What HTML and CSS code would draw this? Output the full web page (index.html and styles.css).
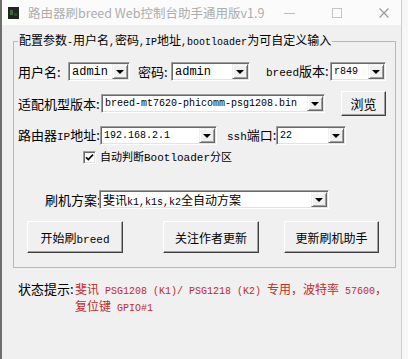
FILE: index.html
```html
<!DOCTYPE html>
<html lang="zh-CN">
<head>
  <meta charset="UTF-8">
  <title>路由器刷breed Web控制台助手通用版v1.9</title>
  <link rel="stylesheet" href="styles.css">
</head>
<body>

<div class="window">
  <div class="titlebar">
    <svg class="app-icon" width="11" height="12" viewBox="0 0 11 12">
      <rect width="11" height="12" fill="#1e261e"/>
      <path d="M2 3h3v5H2z" fill="#3f6b3a"/>
      <path d="M6 6h3v3H6z" fill="#2c4a2a"/>
    </svg>
    <span class="title">路由器刷breed Web控制台助手通用版v1.9</span>
    <span class="ctl ctl-min"><i></i></span>
    <span class="ctl ctl-max"><i></i></span>
    <span class="ctl ctl-close">
      <svg width="10" height="10" viewBox="0 0 10 10"><path d="M0.5 0.5l9 9M9.5 0.5l-9 9" stroke="#9a9a9a" stroke-width="1.2"/></svg>
    </span>
  </div>

  <div class="client">
    <fieldset class="group">
      <legend>配置参数<span class="lat">-</span>用户名<span class="lat">,</span>密码<span class="lat">,IP</span>地址<span class="lat">,bootloader</span>为可自定义输入</legend>

      <div class="row row-1">
        <span class="lbl w-user">用户名:</span>
        <div class="combo c-user"><span class="val val-wide">admin</span><i class="drop"></i></div>
        <span class="lbl w-pass">密码:</span>
        <div class="combo c-pass"><span class="val val-wide">admin</span><i class="drop"></i></div>
        <span class="lbl w-ver"><span class="lat lat-lbl">breed</span>版本:</span>
        <div class="combo c-ver"><span class="val">r849</span><i class="drop"></i></div>
      </div>

      <div class="row row-2">
        <span class="lbl w-model">适配机型版本:</span>
        <div class="combo c-model"><span class="val">breed-mt7620-phicomm-psg1208.bin</span><i class="drop"></i></div>
        <button class="btn btn-browse">浏览</button>
      </div>

      <div class="row row-3">
        <span class="lbl w-ip">路由器<span class="lat lat-lbl">IP</span>地址:</span>
        <div class="combo c-ip"><span class="val">192.168.2.1</span><i class="drop"></i></div>
        <span class="lbl w-ssh"><span class="lat lat-lbl">ssh</span>端口:</span>
        <div class="combo c-ssh"><span class="val">22</span><i class="drop"></i></div>
      </div>

      <div class="row row-chk">
        <span class="checkbox">
          <svg width="9" height="9" viewBox="0 0 9 9"><path d="M1 4.2l2.3 2.4L8 1.6" fill="none" stroke="#000" stroke-width="1.6"/></svg>
        </span>
        <span class="chk-label">自动判断<span class="lat">Bootloader</span>分区</span>
      </div>

      <div class="row row-plan">
        <span class="lbl w-plan">刷机方案:</span>
        <div class="combo c-plan"><span class="val val-cjk">斐讯<span class="lat">k1,k1s,k2</span>全自动方案</span><i class="drop"></i></div>
      </div>

      <div class="row row-btns">
        <button class="btn btn-start">开始刷<span class="lat">breed</span></button>
        <button class="btn btn-follow">关注作者更新</button>
        <button class="btn btn-update">更新刷机助手</button>
      </div>
    </fieldset>

    <div class="status">
      <span class="status-lbl">状态提示:</span>
      <span class="status-msg">斐讯<span class="lat"> PSG1208 (K1)/ PSG1218 (K2) </span>专用，波特率<span class="lat"> 57600</span>，<br>复位键<span class="lat"> GPIO#1</span></span>
    </div>
  </div>
</div>

</body>
</html>
```

FILE: styles.css
```css
* { box-sizing: border-box; }
body { margin: 0; width: 408px; height: 359px; overflow: hidden; background: #f7f7f7; font-family: "Noto Sans CJK SC", sans-serif; color: #000; }
.window { width: 402px; height: 359px; background: #f0f0f0; border-left: 2px solid #6e6e6e; border-right: 1px solid #cdcdcd; }

/* title bar */
.titlebar { height: 25px; background: #fbfbfb; display: flex; align-items: center; padding-left: 6px; }
.app-icon { display: block; flex: none; }
.title { margin-left: 9px; font-size: 12.5px; line-height: 16px; color: #adadad; white-space: nowrap; }
.ctl { height: 25px; display: flex; align-items: center; justify-content: center; flex: none; }
.ctl-min { margin-left: auto; width: 46px; }
.ctl-min i { width: 11px; height: 1px; background: #bdbdbd; margin-top: 2px; }
.ctl-max { width: 50px; }
.ctl-max i { width: 10px; height: 10px; border: 1px solid #c4c4c4; }
.ctl-close { width: 39px; padding-left: 4px; }

.lat { font-family: "Liberation Mono", monospace; font-size: 10px; }

/* group box */
.group { margin: 7px 0 0 11px; width: 383px; border: 1px solid #b8b8b8; padding: 0 0 14px 4px; min-inline-size: 0; }
.group legend { padding: 0 1px; font-size: 12px; line-height: 16px; white-space: nowrap; }

.row { display: flex; align-items: center; }
.row-1 { margin-top: 11px; height: 19px; }
.row-2 { margin-top: 10px; height: 25px; }
.row-3 { margin-top: 10px; height: 19px; }
.row-chk { margin-top: 5px; height: 14px; padding-left: 65px; }
.row-plan { margin-top: 26px; height: 19px; }
.row-btns { margin-top: 12px; height: 32px; }

.lbl { font-size: 13px; line-height: 19px; white-space: nowrap; flex: none; }
.lat-lbl { font-size: 11px; }
.w-user { width: 50px; }
.w-pass { width: 33px; margin-left: 8px; }
.w-ver { width: 64px; margin-left: 16px; }
.w-model { width: 83px; }
.w-ip { width: 82px; }
.w-ssh { width: 49px; margin-left: 10px; }
.w-plan { width: 54px; margin-left: 27px; }

/* combo boxes */
.combo { height: 19px; display: flex; background: #fff; border: 1px solid; border-color: #a0a0a0 #fff #fff #a0a0a0; box-shadow: inset 1px 1px 0 #696969, inset -1px -1px 0 #e3e3e3; flex: none; }
.combo .val { flex: 1; padding: 1px 0 0 3px; font-family: "Liberation Mono", monospace; font-size: 10px; line-height: 16px; white-space: nowrap; overflow: hidden; }
.combo .val-wide { font-size: 12px; }
.combo .val-cjk { font-family: "Noto Sans CJK SC", sans-serif; font-size: 12px; }
.drop { width: 16px; margin: 1px 1px 1px 0; background: #f0f0f0; border: 1px solid; border-color: #f0f0f0 #696969 #696969 #f0f0f0; box-shadow: inset 1px 1px 0 #fff, inset -1px -1px 0 #a0a0a0; display: flex; align-items: center; justify-content: center; }
.drop::after { content: ""; border-top: 4px solid #000; border-left: 4px solid transparent; border-right: 4px solid transparent; margin-top: 1px; }
.c-user { width: 62px; }
.c-pass { width: 79px; }
.c-ver { width: 56px; }
.c-model { width: 224px; }
.c-ip { width: 117px; }
.c-ssh { width: 70px; }
.c-plan { width: 230px; }

/* buttons */
.btn { height: 100%; padding: 0; background: #f0f0f0; font-family: "Noto Sans CJK SC", sans-serif; font-size: 12px; color: #000; border: 1px solid; border-color: #fff #404040 #404040 #fff; box-shadow: inset -1px -1px 0 #a0a0a0; flex: none; }
.btn .lat { font-size: 11px; }
.btn-browse { width: 45px; margin-left: 16px; font-size: 13px; }
.btn-start { width: 96px; margin-left: 9px; }
.btn-follow { width: 96px; margin-left: 40px; }
.btn-update { width: 95px; margin-left: 25px; }

/* checkbox */
.checkbox { width: 13px; height: 13px; background: #fff; border: 1px solid; border-color: #a0a0a0 #fff #fff #a0a0a0; box-shadow: inset 1px 1px 0 #696969, inset -1px -1px 0 #e3e3e3; display: flex; align-items: center; justify-content: center; flex: none; }
.chk-label { margin-left: 4px; font-size: 11px; line-height: 14px; white-space: nowrap; }
.chk-label .lat { font-size: 11px; }

/* status line */
.status { display: flex; align-items: flex-start; margin-top: 13px; padding-left: 16px; }
.status-lbl { width: 57px; font-size: 13px; line-height: 16px; flex: none; }
.status-msg { margin-top: 1px; font-size: 12px; line-height: 14px; color: #c42a2a; white-space: nowrap; }
```
